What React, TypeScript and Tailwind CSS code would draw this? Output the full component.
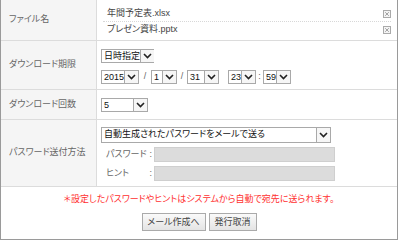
import type { ReactNode } from "react";

const font = "font-['Liberation_Sans','Noto_Sans_CJK_JP',sans-serif] [font-feature-settings:'palt']";

function Chevron() {
  return (
    <svg width="9" height="6" viewBox="0 0 9 6" aria-hidden>
      <path d="M1 1 L4.5 4.5 L8 1" fill="none" stroke="#222" strokeWidth="1.6" />
    </svg>
  );
}

function Select({ value, className }: { value: string; className: string }) {
  return (
    <div className={`flex h-[14px] items-stretch border border-[#a9a9a9] bg-white ${className}`}>
      <span className="flex-1 whitespace-nowrap pl-[2px] text-[9px] leading-[12px] text-[#111]">{value}</span>
      <span className="flex w-[14px] shrink-0 items-center justify-center border-l border-[#a9a9a9] bg-[#f6f6f6]">
        <Chevron />
      </span>
    </div>
  );
}

function RemoveIcon() {
  return (
    <svg width="8" height="8" viewBox="0 0 8 8" aria-hidden>
      <rect x="0.5" y="0.5" width="7" height="7" fill="#f4f4f4" stroke="#aaa" />
      <path d="M2.2 2.2 L5.8 5.8 M5.8 2.2 L2.2 5.8" stroke="#999" strokeWidth="0.9" />
    </svg>
  );
}

function Row({ label, children, className }: { label: string; children: ReactNode; className: string }) {
  return (
    <div className={`flex border-b border-[#dcdcdc] ${className}`}>
      <div className="flex w-[96px] shrink-0 items-center whitespace-nowrap border-r border-[#dcdcdc] bg-[#f5f5f5] pl-[8px] text-[9px] text-[#666]">
        {label}
      </div>
      <div className="flex-1">{children}</div>
    </div>
  );
}

export default function App() {
  return (
    <div className={`h-[241px] w-[400px] bg-white ${font}`}>
      <div className="h-[240px] w-[398px] border-x border-b border-[#9a9a9a]">
        <Row label="ファイル名" className="h-[41px]">
          <div className="px-[6px] pt-[6px] text-[9px] text-[#444]">
            {["年間予定表.xlsx", "プレゼン資料.pptx"].map((f, i) => (
              <div
                key={f}
                className={`flex h-[16px] items-center justify-between pl-[4px] ${i === 0 ? "border-b border-dotted border-[#d8d8d8]" : ""}`}
              >
                <span>{f}</span>
                <RemoveIcon />
              </div>
            ))}
          </div>
        </Row>

        <Row label="ダウンロード期限" className="h-[49px]">
          <div className="flex flex-col gap-[7px] pl-[4px] pt-[8px]">
            <Select value="日時指定" className="w-[53px]" />
            <div className="flex items-center text-[9px] text-[#666]">
              <Select value="2015" className="w-[38px]" />
              <span className="w-[12px] text-center">/</span>
              <Select value="1" className="w-[26px]" />
              <span className="w-[10px] text-center">/</span>
              <Select value="31" className="w-[32px]" />
              <span className="w-[9px]" />
              <Select value="23" className="w-[28px]" />
              <span className="w-[7px] text-center">:</span>
              <Select value="59" className="w-[28px]" />
            </div>
          </div>
        </Row>

        <Row label="ダウンロード回数" className="h-[30px]">
          <div className="flex h-full items-center pl-[4px]">
            <Select value="5" className="w-[47px]" />
          </div>
        </Row>

        <Row label="パスワード送付方法" className="h-[67px]">
          <div className="flex flex-col gap-[4px] whitespace-nowrap pl-[4px] pt-[7px] text-[9px] text-[#666]">
            <Select value="自動生成されたパスワードをメールで送る" className="w-[230px] h-[16px]" />
            <div className="flex items-center">
              <span className="flex w-[53px] justify-between pl-[5px] pr-[2px]">
                <span>パスワード</span>
                <span>:</span>
              </span>
              <div className="h-[15px] w-[181px] border border-[#cfcfcf] bg-[#dcdcdc]" />
            </div>
            <div className="flex items-center">
              <span className="flex w-[53px] justify-between pl-[5px] pr-[2px]">
                <span>ヒント</span>
                <span>:</span>
              </span>
              <div className="h-[15px] w-[181px] border border-[#cfcfcf] bg-[#dcdcdc]" />
            </div>
          </div>
        </Row>

        <div className="flex flex-col items-center pt-[5px]">
          <p className="text-[9px] leading-[14px] text-[#ff3030]">
            ＊設定したパスワードやヒントはシステムから自動で宛先に送られます。
          </p>
          <div className="mt-[7px] flex gap-[3px]">
            {[
              { t: "メール作成へ", w: "w-[64px]" },
              { t: "発行取消", w: "w-[48px]" },
            ].map((b) => (
              <button
                key={b.t}
                className={`h-[18px] whitespace-nowrap border border-[#aaa] bg-gradient-to-b from-[#fafafa] to-[#e4e4e4] text-[9px] leading-[14px] text-[#444] ${b.w}`}
              >
                {b.t}
              </button>
            ))}
          </div>
        </div>
      </div>
    </div>
  );
}
